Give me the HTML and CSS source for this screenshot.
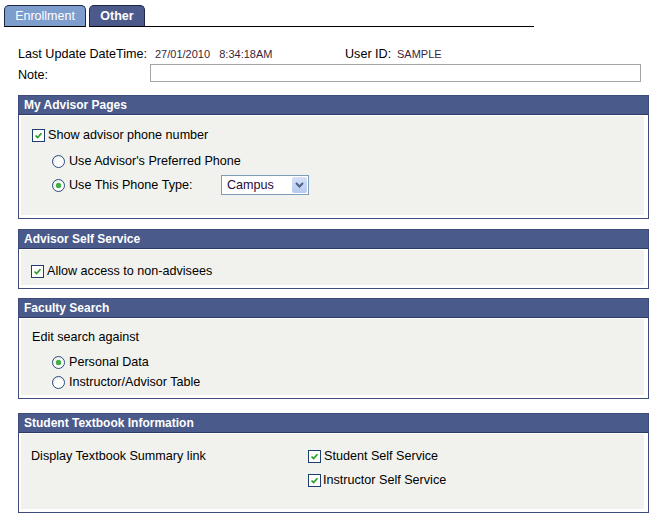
FILE: index.html
```html
<!DOCTYPE html>
<html>
<head>
<meta charset="utf-8">
<link rel="stylesheet" href="styles.css">
</head>
<body>
<div class="page">
  <div class="tabs">
    <div class="tab tab-off">Enrollment</div>
    <div class="tab tab-on">Other</div>
    <div class="tab-line"></div>
  </div>

  <div class="info">
    <div class="info-row">
      <span class="lbl lbl-dt">Last Update DateTime:</span>
      <span class="val val-dt">27/01/2010&nbsp;&nbsp; 8:34:18AM</span>
      <span class="lbl lbl-uid">User ID:</span>
      <span class="val">SAMPLE</span>
    </div>
    <div class="info-row note-row">
      <span class="lbl lbl-note">Note:</span>
      <span class="note-box"></span>
    </div>
  </div>

  <div class="panel p1">
    <div class="panel-head">My Advisor Pages</div>
    <div class="panel-body">
      <div class="row"><span class="cb"><svg viewBox="0 0 13 13" width="13" height="13"><path d="M3 6.5 L5.4 9 L10 3.8" fill="none" stroke="#21a121" stroke-width="2"/></svg></span><span class="txt">Show advisor phone number</span></div>
      <div class="row r-rad1 ind"><span class="rad"></span><span class="txt">Use Advisor's Preferred Phone</span></div>
      <div class="row r-rad2 ind"><span class="rad on"></span><span class="txt w-type">Use This Phone Type:</span>
        <span class="select"><span class="sel-txt">Campus</span><span class="sel-btn"><svg viewBox="0 0 15 16" width="15" height="16"><path d="M4 6 L7.5 9.5 L11 6" fill="none" stroke="#4d6185" stroke-width="2"/></svg></span></span>
      </div>
    </div>
  </div>

  <div class="panel p2">
    <div class="panel-head">Advisor Self Service</div>
    <div class="panel-body">
      <div class="row"><span class="cb"><svg viewBox="0 0 13 13" width="13" height="13"><path d="M3 6.5 L5.4 9 L10 3.8" fill="none" stroke="#21a121" stroke-width="2"/></svg></span><span class="txt">Allow access to non-advisees</span></div>
    </div>
  </div>

  <div class="panel p3">
    <div class="panel-head">Faculty Search</div>
    <div class="panel-body">
      <div class="row"><span class="txt">Edit search against</span></div>
      <div class="row r-rad3 ind"><span class="rad on"></span><span class="txt">Personal Data</span></div>
      <div class="row ind"><span class="rad"></span><span class="txt">Instructor/Advisor Table</span></div>
    </div>
  </div>

  <div class="panel p4">
    <div class="panel-head">Student Textbook Information</div>
    <div class="panel-body">
      <div class="tb-grid">
        <div class="row tb-label"><span class="txt">Display Textbook Summary link</span></div>
        <div class="tb-checks">
          <div class="row"><span class="cb"><svg viewBox="0 0 13 13" width="13" height="13"><path d="M3 6.5 L5.4 9 L10 3.8" fill="none" stroke="#21a121" stroke-width="2"/></svg></span><span class="txt">Student Self Service</span></div>
          <div class="row r-ins"><span class="cb"><svg viewBox="0 0 13 13" width="13" height="13"><path d="M3 6.5 L5.4 9 L10 3.8" fill="none" stroke="#21a121" stroke-width="2"/></svg></span><span class="txt">Instructor Self Service</span></div>
        </div>
      </div>
    </div>
  </div>
</div>
</body>
</html>
```
FILE: styles.css
```css
html, body {
  margin: 0;
  padding: 0;
  background: #ffffff;
}
body {
  font-family: "Liberation Sans", Arial, sans-serif;
  font-size: 12px;
  color: #000;
}
.page {
  width: 651px;
  height: 518px;
  overflow: hidden;
}

/* Tabs */
.tabs {
  display: flex;
  align-items: flex-end;
  padding: 5px 0 0 4px;
  height: 22px;
}
.tab {
  height: 20px;
  border: 1px solid #1c2646;
  border-bottom: 1px solid #000;
  border-radius: 5px 5px 0 0;
  color: #fff;
  font-size: 12.5px;
  line-height: 21px;
  text-align: center;
}
.tab-off {
  width: 80px;
  background: #7d9dcd;
}
.tab-on {
  width: 54px;
  margin-left: 3px;
  background: #4b5a8b;
  font-weight: bold;
}
.tab-line {
  width: 389px;
  border-bottom: 1px solid #000;
}

/* info block */
.info {
  padding: 19px 0 0 18px;
}
.info-row {
  display: flex;
  align-items: center;
  height: 16px;
}
.lbl {
  font-size: 12.6px;
  color: #000;
}
.val {
  font-size: 11px;
  color: #3a1f3a;
}
.lbl-dt { width: 137px; }
.val-dt { width: 190px; }
.lbl-uid { width: 52px; }
.note-row {
  margin-top: 2px;
  height: 18px;
  align-items: flex-start;
}
.lbl-note {
  width: 132px;
  padding-top: 4px;
  line-height: 15px;
}
.note-box {
  width: 489px;
  height: 16px;
  border: 1px solid #a5a5a5;
  background: #fff;
}

/* panels */
.panel {
  margin-left: 18px;
  width: 629px;
  border: 1px solid #3d4c7d;
  background: #fff;
}
.p1 { margin-top: 13px; }
.p2 { margin-top: 10px; }
.p3 { margin-top: 9px; }
.p4 { margin-top: 14px; }
.panel-head {
  height: 18px;
  line-height: 18px;
  background: #4a5a8b;
  border-bottom: 1px solid #2c3a68;
  color: #fff;
  font-weight: bold;
  font-size: 12px;
  padding-left: 5px;
}
.panel-body {
  margin: 1px 4px 3px 2px;
  background: #f1f2ee;
}
.row {
  display: flex;
  align-items: center;
  height: 20px;
}
.txt {
  font-size: 12.6px;
  color: #000;
}

/* checkbox */
.cb {
  width: 11px;
  height: 11px;
  border: 1px solid #1c3f70;
  background: #fff;
  margin-right: 3px;
  display: flex;
  align-items: center;
  justify-content: center;
}
.cb svg {
  width: 11px;
  height: 11px;
}

/* radio */
.rad {
  width: 11px;
  height: 11px;
  border: 1px solid #2a4d80;
  border-radius: 50%;
  background: radial-gradient(circle at 60% 65%, #ffffff 40%, #dcdcd6 100%);
  margin-right: 4px;
  display: flex;
  align-items: center;
  justify-content: center;
}
.rad.on::after {
  content: "";
  width: 5px;
  height: 5px;
  border-radius: 50%;
  background: #3fae3f;
  box-shadow: 0 0 1px #3fae3f;
}

/* panel 1 */
.p1 .panel-body {
  padding: 9px 0 20px 11px;
}
.ind { padding-left: 20px; }
.r-rad1 { margin-top: 6px; }
.r-rad2 { margin-top: 4px; }
.w-type { width: 152px; }
.select {
  width: 86px;
  height: 18px;
  border: 1px solid #7f9db9;
  background: #fff;
  display: flex;
  align-items: center;
  justify-content: space-between;
}
.sel-txt {
  padding-left: 5px;
  font-size: 12.6px;
  color: #2a0a3a;
}
.sel-btn {
  width: 15px;
  height: 16px;
  margin-right: 1px;
  background: linear-gradient(#d5e1f8, #b6c9ee);
  border-radius: 2px;
  display: flex;
}

/* panel 2 */
.p2 .panel-body {
  padding: 11px 0 4px 10px;
}

/* panel 3 */
.p3 .panel-body {
  padding: 8px 0 3px 11px;
}
.r-rad3 { margin-top: 5px; }

/* panel 4 */
.p4 .panel-body {
  padding: 12px 0 19px 10px;
}
.tb-grid {
  display: flex;
}
.tb-label {
  width: 277px;
}
.r-ins { margin-top: 4px; }
.r-ins .cb { margin-right: 2px; }
```
